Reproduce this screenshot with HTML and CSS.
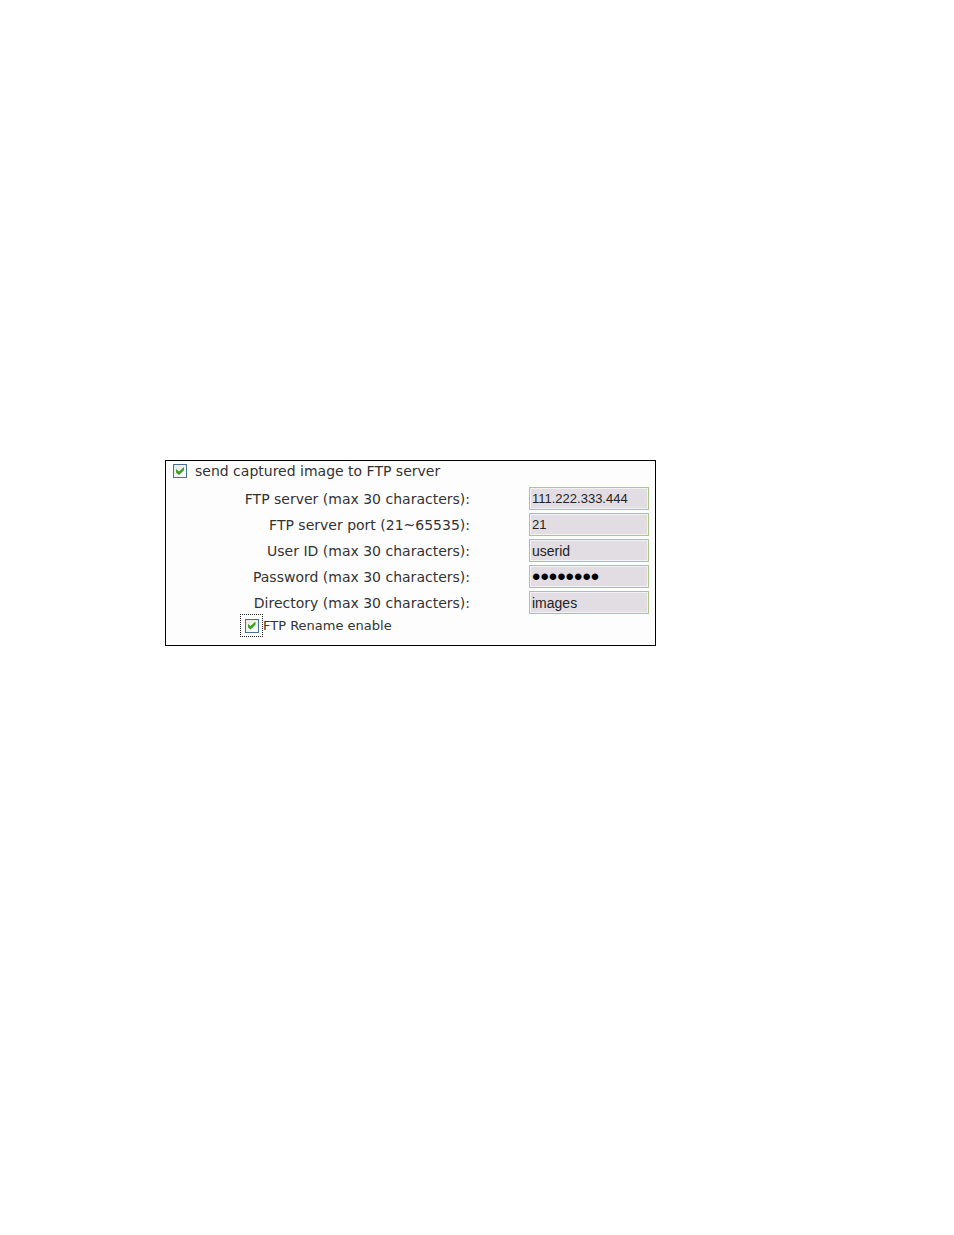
FILE: index.html
```html
<!DOCTYPE html>
<html lang="en">
<head>
<meta charset="utf-8">
<title>FTP server settings</title>
<link rel="stylesheet" href="styles.css">
</head>
<body>
<main class="page">
  <form class="panel">
    <label class="toggle"><input class="check" type="checkbox" checked>send captured image to FTP server</label>
    <div class="fields">
      <div class="row"><label class="name" for="server">FTP server (max 30 characters):</label><input class="box number" id="server" type="text" maxlength="30" value="111.222.333.444"></div>
      <div class="row"><label class="name" for="port">FTP server port (21~65535):</label><input class="box number" id="port" type="text" value="21"></div>
      <div class="row"><label class="name" for="user">User ID (max 30 characters):</label><input class="box" id="user" type="text" maxlength="30" value="userid"></div>
      <div class="row"><label class="name" for="password">Password (max 30 characters):</label><input class="box secret" id="password" type="password" maxlength="30" value="password"></div>
      <div class="row"><label class="name" for="directory">Directory (max 30 characters):</label><input class="box" id="directory" type="text" maxlength="30" value="images"></div>
    </div>
    <label class="toggle rename"><span class="focus"><input class="check" type="checkbox" checked></span>FTP Rename enable</label>
  </form>
</main>
</body>
</html>
```
FILE: styles.css
```css
* {
  box-sizing: border-box;
}

body {
  margin: 0;
  background: #fff;
  color: #333;
  font: 14px/20px "DejaVu Sans", Verdana, sans-serif;
}

.page {
  padding: 460px 24px 24px 165px;
}

.panel {
  max-width: 491px;
  padding: 0 6px 8px 7px;
  border: 1px solid #000;
  background: #fdfdfd;
}

.toggle {
  display: flex;
  align-items: center;
  gap: 8px;
}

.check {
  appearance: none;
  display: grid;
  place-items: center;
  flex: none;
  width: 14px;
  height: 14px;
  margin: 0;
  border: 1px solid #41719c;
  background: linear-gradient(135deg, #e6e6e2, #fff);
}

.check:checked::before {
  content: "";
  width: 8px;
  height: 8px;
  background: #3f9f24;
  clip-path: polygon(0 25%, 38% 55%, 100% 0, 100% 42%, 38% 100%, 0 68%);
}

.fields {
  display: grid;
  gap: 3px;
  padding-top: 6px;
}

.row {
  display: flex;
  align-items: center;
  justify-content: flex-end;
  gap: 59px;
}

.box {
  width: 120px;
  height: 23px;
  padding: 0 2px;
  border: 1px solid #aec588;
  outline: none;
  background: #e2dde2;
  box-shadow: inset 0 0 0 1px #f4f1f4;
  color: #222;
  font: 14px "Liberation Sans", Arial, sans-serif;
}

.number {
  font-size: 13px;
}

.secret {
  color: #000;
  font-size: 24px;
}

.rename {
  gap: 0;
  padding-left: 67px;
  font-size: 13px;
}

.focus {
  display: grid;
  place-items: center;
  flex: none;
  width: 23px;
  height: 23px;
  border: 1px dotted #222;
}
```
